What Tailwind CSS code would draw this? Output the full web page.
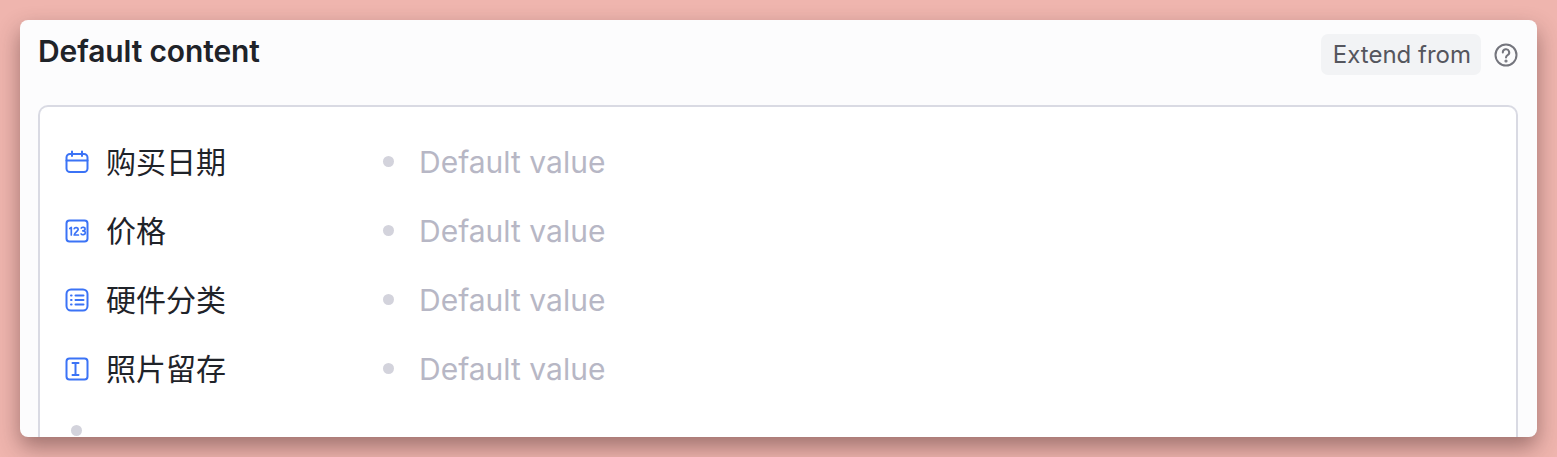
<!DOCTYPE html>
<html>
<head>
<meta charset="utf-8">
<script src="https://cdn.jsdelivr.net/npm/@tailwindcss/browser@4"></script>
</head>
<body class="m-0 w-[1557px] h-[457px] overflow-hidden bg-[#efb5ae] font-['Inter','Noto_Sans_CJK_SC',sans-serif]">
<div class="pt-5 pl-5 pr-5 h-[457px] overflow-hidden">
<div class="w-[1517px] h-[417px] bg-[#fcfcfd] rounded-[8px] overflow-hidden shadow-[0_10px_22px_rgba(60,30,30,0.45)] pl-[18px] pr-[19px] flex flex-col">
  <div class="h-[85px] shrink-0 flex justify-between items-start">
    <div class="text-[30px] leading-[32px] font-semibold text-[#1f2329] mt-[15px] tracking-[-0.13px]">Default content</div>
    <div class="flex items-center gap-[13px] mt-[14px]">
      <div class="h-[41px] pl-[12px] pr-[10px] rounded-[7px] bg-[#f2f3f5] text-[24px] leading-[41px] text-[#55565e]">Extend from</div>
      <svg class="w-6 h-6" viewBox="0 0 24 24" fill="none" stroke="#74757d" stroke-width="2" stroke-linecap="round"><circle cx="12" cy="12" r="10.5"/><path d="M8.8 9.5a3.2 3.2 0 1 1 4.8 2.7c-1 .6-1.6 1.2-1.6 2.3"/><circle cx="12" cy="18" r="0.6" fill="#74757d"/></svg>
    </div>
  </div>
  <div class="flex-1 min-h-0 border-2 border-b-0 border-[#d9dae3] rounded-t-[10px] bg-white pt-[20px] pl-[25px] relative">
    <div class="flex flex-col">
      <div class="h-[69px] flex items-center">
        <svg class="w-6 h-6 shrink-0" viewBox="0 0 24 24" fill="none" stroke="#3b73f6" stroke-width="2" stroke-linecap="round" stroke-linejoin="round"><rect x="1.5" y="4" width="21" height="18" rx="3.5"/><path d="M1.5 10.5h21M7 1.5v4.5M17 1.5v4.5"/></svg>
        <div class="w-[277px] ml-[17px] text-[30px] leading-none text-[#1f2329] shrink-0">购买日期</div>
        <div class="w-[11px] h-[11px] rounded-full bg-[#d3d3dc] shrink-0"></div>
        <div class="ml-[25px] text-[30px] leading-none text-[#b7b7c5]">Default value</div>
      </div>
      <div class="h-[69px] flex items-center">
        <svg class="w-6 h-6 shrink-0" viewBox="0 0 24 24" fill="none" stroke="#3b73f6" stroke-width="2" stroke-linecap="round" stroke-linejoin="round"><rect x="1.5" y="1.5" width="21" height="21" rx="3"/><path stroke-width="1.7" d="M4.8 9.5l1.5-1v7.5M9.2 9.6c.4-1.5 4-1.5 4 .7 0 1.7-4 3.6-4 5.7h4.2M16.3 9c1-1.2 4-.9 3.8 1 0 1.2-1 1.8-2.3 1.9 1.5 0 2.6.8 2.5 2 -.1 2-3.3 2.4-4.2 1"/></svg>
        <div class="w-[277px] ml-[17px] text-[30px] leading-none text-[#1f2329] shrink-0">价格</div>
        <div class="w-[11px] h-[11px] rounded-full bg-[#d3d3dc] shrink-0"></div>
        <div class="ml-[25px] text-[30px] leading-none text-[#b7b7c5]">Default value</div>
      </div>
      <div class="h-[69px] flex items-center">
        <svg class="w-6 h-6 shrink-0" viewBox="0 0 24 24" fill="none" stroke="#3b73f6" stroke-width="2" stroke-linecap="round" stroke-linejoin="round"><rect x="1.5" y="1.5" width="21" height="21" rx="4.5"/><path d="M10.5 7.5h8M10.5 12h8M10.5 16.5h8M6 7.5h.6M6 12h.6M6 16.5h.6"/></svg>
        <div class="w-[277px] ml-[17px] text-[30px] leading-none text-[#1f2329] shrink-0">硬件分类</div>
        <div class="w-[11px] h-[11px] rounded-full bg-[#d3d3dc] shrink-0"></div>
        <div class="ml-[25px] text-[30px] leading-none text-[#b7b7c5]">Default value</div>
      </div>
      <div class="h-[69px] flex items-center">
        <svg class="w-6 h-6 shrink-0" viewBox="0 0 24 24" fill="none" stroke="#3b73f6" stroke-width="2" stroke-linecap="round" stroke-linejoin="round"><rect x="1.5" y="1.5" width="21" height="21" rx="3"/><path d="M7.5 6h6M7.5 18h6M10.5 6v12"/></svg>
        <div class="w-[277px] ml-[17px] text-[30px] leading-none text-[#1f2329] shrink-0">照片留存</div>
        <div class="w-[11px] h-[11px] rounded-full bg-[#d3d3dc] shrink-0"></div>
        <div class="ml-[25px] text-[30px] leading-none text-[#b7b7c5]">Default value</div>
      </div>
    </div>
    <div class="w-[11px] h-[11px] rounded-full bg-[#d3d3dc] ml-[6px] mt-[22px]"></div>
  </div>
</div>
</div>
</body>
</html>
